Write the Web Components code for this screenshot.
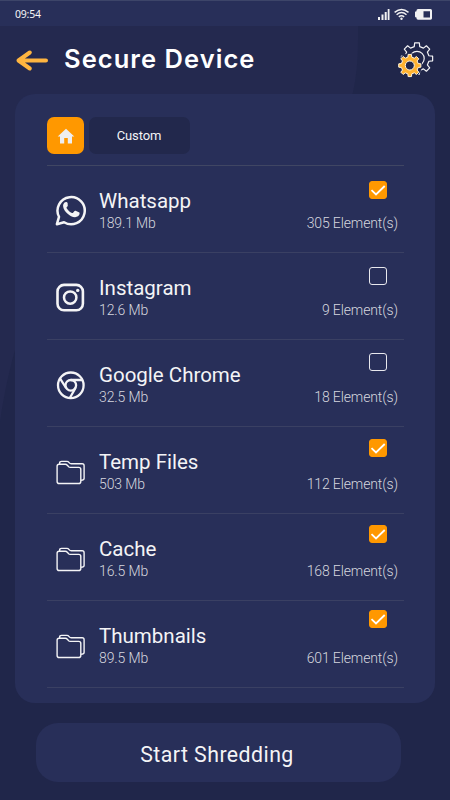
<!DOCTYPE html>
<html lang="en">
    <head>
        <meta charset="UTF-8">
        <meta name="viewport" content="width=device-width, initial-scale=1.0">
        <title>Secure Device</title>
        <style>
            body {
                margin: 0;
                font-family: Roboto, sans-serif;
                color: #f4f4f6;
                background: #20264a;
            }
        </style>
    </head>
    <body>
        <secure-screen>
            <status-bar time="09:54"></status-bar>
            <page-header>Secure Device</page-header>
            <file-panel>
                <tab-bar slot="tabs">Custom</tab-bar>
                <file-row icon="whatsapp" size="189.1 Mb" count="305" checked style="--check-top: 15px">Whatsapp</file-row>
                <file-row icon="instagram" size="12.6 Mb" count="9" style="--check-top: 14px">Instagram</file-row>
                <file-row icon="chrome" size="32.5 Mb" count="18" style="--check-top: 13px">Google Chrome</file-row>
                <file-row icon="folder" size="503 Mb" count="112" checked style="--check-top: 12px">Temp Files</file-row>
                <file-row icon="folder" size="16.5 Mb" count="168" checked style="--check-top: 11px">Cache</file-row>
                <file-row icon="folder" size="89.5 Mb" count="601" checked style="--check-top: 9px">Thumbnails</file-row>
            </file-panel>
            <action-button>Start Shredding</action-button>
        </secure-screen>

        <script>
            // Base class: renders the markup once into an open shadow root
            class BaseElement extends HTMLElement {
                constructor() {
                    super();
                    this.attachShadow({ mode: "open" });
                }

                connectedCallback() {
                    this.shadowRoot.innerHTML = this.render();
                }
            }

            // Toothed outline centred on 0,0
            function gearPath(outer, inner, teeth) {
                const step = (Math.PI * 2) / teeth;
                const points = [];
                for (let i = 0; i < teeth; i++) {
                    const a = i * step - Math.PI / 2;
                    [[-0.29, inner], [-0.19, outer], [0.19, outer], [0.29, inner]].forEach(([k, r]) => {
                        points.push(`${(Math.cos(a + k * step) * r).toFixed(2)} ${(Math.sin(a + k * step) * r).toFixed(2)}`);
                    });
                }
                return `M${points.join("L")}Z`;
            }

            const icons = {
                whatsapp: `
                    <path d="M2.9 30.2 5 22.8A13.6 13.6 0 1 1 10.1 28.3Z" fill="none" stroke="currentColor" stroke-width="2.5" stroke-linejoin="round"/>
                    <path d="M11.4 8.5c-.5-1.1-1-1.1-1.6-1.1-.7 0-1.4.2-2 .9-.7.8-1.3 2-1.2 3.6.2 3 2.3 5.500 4.500 7.700 2.600 2.600 5.400 4 8.200 4 2.400 0 4.400-1.500 4.700-3 .2-.9.2-1.700-.1-1.900l-4-2c-.7-.2-1 0-1.400.6l-1.300 1.600c-.5.5-1 .4-1.700.1-2.200-1-4-2.800-5.100-4.800-.4-.7 0-1.100.4-1.600.6-.8 1-1.200.7-2z" transform="translate(2.9 1) scale(.94)" fill="currentColor"/>`,
                instagram: `
                    <rect x="3.500" y="3.900" width="25.400" height="25.400" rx="6.500" fill="none" stroke="currentColor" stroke-width="2.600"/>
                    <circle cx="16.2" cy="16.6" r="6.2" fill="none" stroke="currentColor" stroke-width="2.5"/>
                    <circle cx="23.7" cy="9.4" r="1.7" fill="currentColor"/>`,
                chrome: `
                    <g fill="none" stroke="currentColor" stroke-width="2.3">
                        <circle cx="16.8" cy="17.3" r="12.8"/>
                        <circle cx="16.8" cy="17.3" r="5.3"/>
                        <path d="M16.8 12H28.4M12.1 20 6 10.4M21.5 20 15.8 30"/>
                    </g>`,
                folder: `
                    <g fill="none" stroke="currentColor" stroke-width="1.4" stroke-linejoin="round">
                        <path d="M5.2 9.2h6.1c1.2 0 1.6.5 2.3 1.3l.9 1.1c.5.6.9.8 1.8.8h8.4c1.4 0 2.1.7 2.1 2v12c0 1.4-.7 2.1-2.1 2.1H5.2c-1.4 0-2.1-.7-2.1-2.1V11.2c0-1.3.7-2 2.1-2z"/>
                        <path d="M5.6 9V8.3c0-1.3.7-1.9 1.9-1.9h5.4c1.1 0 1.6.4 2.2 1.2.6.8 1.1 1.2 2.2 1.2h10.9c1.2 0 1.9.7 1.9 1.9v12.8c0 1.1-.8 1.7-3 1.7"/>
                    </g>`
            };

            class SecureScreen extends BaseElement {
                render() {
                    return /* html */ `
                        <style>
                            :host {
                                display: flex;
                                flex-direction: column;
                                position: relative;
                                width: 450px;
                                height: 800px;
                                overflow: hidden;
                            }
                            .backdrop {
                                position: absolute;
                                inset: 0;
                                z-index: -1;
                            }
                        </style>
                        <svg class="backdrop" width="450" height="800">
                            <path d="M0 0H358V40C358 62 356 79 353 92C325 230 35 260 15 350C8 375 3 400 0 422Z" fill="#24294f"/>
                        </svg>
                        <slot></slot>
                    `;
                }
            }

            class StatusBar extends BaseElement {
                render() {
                    return /* html */ `
                        <style>
                            :host {
                                display: flex;
                                align-items: center;
                                justify-content: space-between;
                                box-sizing: border-box;
                                height: 26px;
                                padding: 1px 18px 0 15px;
                                border-top: 1px solid #3d4569;
                                background: #282f59;
                                font: 10.5px "Noto Sans", sans-serif;
                                letter-spacing: -0.2px;
                            }
                            svg {
                                display: block;
                            }
                        </style>
                        <span>${this.getAttribute("time")}</span>
                        <svg width="55" height="13" viewBox="0 0 55 13" fill="#f1f1f3">
                            <rect x="1" y="9" width="2" height="3"/>
                            <rect x="4.5" y="6.5" width="2" height="5.5"/>
                            <rect x="7.7" y="4" width="2" height="8"/>
                            <rect x="10.7" y="1" width="1.8" height="11"/>
                            <g fill="none" stroke="#f1f1f3" stroke-width="1.4">
                                <path d="M17.6 4.4Q24.5-1.4 31.5 4.4M19.6 6.7Q24.5 2.5 29.5 6.7M21.8 8.9Q24.5 6.7 27.2 8.9"/>
                            </g>
                            <circle cx="24.5" cy="10.7" r="1.2"/>
                            <path fill-rule="evenodd" d="M41 1H53.5Q55 1 55 2.5V10.3Q55 11.7 53.5 11.7H41Q39.5 11.7 39.5 10.3V9.5Q38 9.5 38 8.5V4.3Q38 3.3 39.5 3.3V2.5Q39.5 1 41 1ZM46.5 3.300V9.400H53V3.300Z"/>
                        </svg>
                    `;
                }
            }

            class PageHeader extends BaseElement {
                render() {
                    return /* html */ `
                        <style>
                            :host {
                                display: flex;
                                align-items: center;
                                box-sizing: border-box;
                                height: 68px;
                                padding: 0 16px 0 15px;
                            }
                            h1 {
                                flex: 1;
                                margin: 0 0 3px 15px;
                                font: 600 25.5px/32px Inter, sans-serif;
                                letter-spacing: 1.05px;
                                color: #fff;
                                white-space: nowrap;
                            }
                        </style>
                        <svg width="34" height="24" viewBox="0 0 34 24" fill="none" stroke="#ffb540" stroke-width="4" stroke-linecap="round" stroke-linejoin="round">
                            <path d="M31 12.5H4M14.8 4.5 3.5 12.5 14.8 20.5"/>
                        </svg>
                        <h1><slot></slot></h1>
                        <svg width="36" height="36" viewBox="0 0 36 36">
                            <g fill="none" stroke="#f2f2f4" stroke-width="1.2" stroke-linejoin="round">
                                <path d="${gearPath(15.8, 12.2, 8)}" transform="translate(19 16.5)"/>
                                <circle cx="19" cy="16.5" r="7.2"/>
                            </g>
                            <circle cx="11.8" cy="23.5" r="12.2" fill="#20264a"/>
                            <path d="${gearPath(11.2, 8.6, 8)}" transform="translate(11.8 23.5)" fill="#ffb331" stroke="#fff5df" stroke-width="1" stroke-linejoin="round"/>
                            <circle cx="11.8" cy="23.5" r="4.5" fill="#20264a" stroke="#fff5df"/>
                        </svg>
                    `;
                }
            }

            class FilePanel extends BaseElement {
                render() {
                    return /* html */ `
                        <style>
                            :host {
                                display: block;
                                box-sizing: border-box;
                                height: 609px;
                                margin: 0 15px;
                                padding: 23px 31px 0 32px;
                                border-radius: 20px;
                                background: #282f59;
                            }
                        </style>
                        <slot name="tabs"></slot>
                        <slot></slot>
                    `;
                }
            }

            class TabBar extends BaseElement {
                render() {
                    return /* html */ `
                        <style>
                            :host {
                                display: flex;
                                gap: 5px;
                                height: 48px;
                                border-bottom: 1px solid #404663;
                            }
                            .home, .tab {
                                display: flex;
                                align-items: center;
                                justify-content: center;
                                height: 37px;
                                border-radius: 7px;
                            }
                            .home {
                                width: 37px;
                                background: #ff9800;
                            }
                            .tab {
                                width: 101px;
                                padding-right: 1px;
                                box-sizing: border-box;
                                background: #22284c;
                                font-size: 13px;
                                letter-spacing: -0.1px;
                            }
                        </style>
                        <div class="home">
                            <svg width="18" height="16" viewBox="0 0 18 16" fill="#eeeef0">
                                <path d="M9 .8 17.3 8.5H15V15.5H10.8V10H7.2V15.5H3V8.5H.7Z"/>
                            </svg>
                        </div>
                        <div class="tab"><slot></slot></div>
                    `;
                }
            }

            class FileRow extends BaseElement {
                render() {
                    const checked = this.hasAttribute("checked");
                    return /* html */ `
                        <style>
                            :host {
                                display: flex;
                                box-sizing: border-box;
                                height: 87px;
                                padding-left: 7px;
                                border-bottom: 1px solid #3a4063;
                            }
                            .icon {
                                margin: 28px 12px 0 0;
                            }
                            .info {
                                flex: 1;
                                padding-top: 22px;
                            }
                            .name {
                                font-size: 20.5px;
                                line-height: 26px;
                            }
                            .size, .count {
                                font-size: 14px;
                                font-weight: 300;
                                line-height: 18px;
                                letter-spacing: -0.12px;
                                color: #d6d7df;
                            }
                            .side {
                                display: flex;
                                flex-direction: column;
                                justify-content: space-between;
                                align-items: flex-end;
                                padding: var(--check-top) 6px 20px 0;
                            }
                            .check {
                                box-sizing: border-box;
                                width: 18px;
                                height: 18px;
                                margin-right: 11px;
                                border: 1px solid #e8e8ed;
                                border-radius: 3px;
                            }
                            .check.on {
                                border-color: #ff9800;
                                background: #ff9800;
                            }
                            .check svg {
                                display: block;
                            }
                        </style>
                        <svg class="icon" width="33" height="33" viewBox="0 0 33 33">${icons[this.getAttribute("icon")]}</svg>
                        <div class="info">
                            <div class="name"><slot></slot></div>
                            <div class="size">${this.getAttribute("size")}</div>
                        </div>
                        <div class="side">
                            <div class="check ${checked ? "on" : ""}">
                                ${checked ? `<svg width="16" height="16" viewBox="0 0 16 16" fill="none" stroke="#fff" stroke-width="1.8"><path d="M1.5 8.2 6 12.5 14.7 4"/></svg>` : ""}
                            </div>
                            <div class="count">${this.getAttribute("count")} Element(s)</div>
                        </div>
                    `;
                }
            }

            class ActionButton extends BaseElement {
                render() {
                    return /* html */ `
                        <style>
                            :host {
                                display: block;
                                margin: 20px 49px 0 36px;
                            }
                            button {
                                display: block;
                                width: 100%;
                                height: 59px;
                                padding: 4px 3px 0 0;
                                border: none;
                                border-radius: 22px;
                                background: #282f59;
                                color: #f4f4f6;
                                font: 21.3px Roboto, sans-serif;
                                letter-spacing: 0.45px;
                            }
                        </style>
                        <button><slot></slot></button>
                    `;
                }
            }

            customElements.define("secure-screen", SecureScreen);
            customElements.define("status-bar", StatusBar);
            customElements.define("page-header", PageHeader);
            customElements.define("file-panel", FilePanel);
            customElements.define("tab-bar", TabBar);
            customElements.define("file-row", FileRow);
            customElements.define("action-button", ActionButton);
        </script>
    </body>
</html>
